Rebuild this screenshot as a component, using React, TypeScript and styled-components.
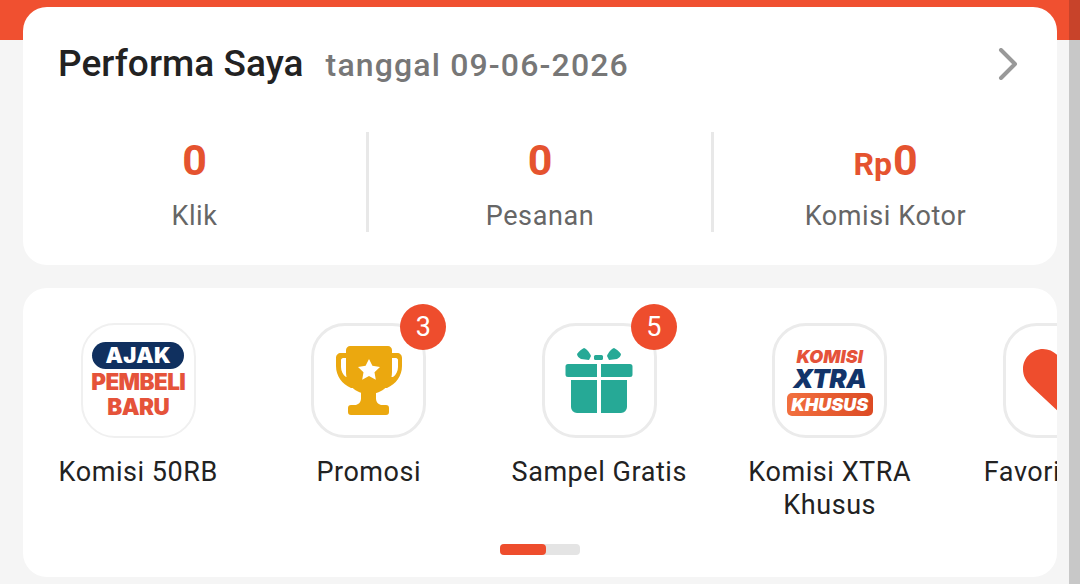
import React from "react";
import styled, { createGlobalStyle } from "styled-components";

const Global = createGlobalStyle`
  html, body { margin: 0; padding: 0; width: 1080px; height: 584px; overflow: hidden; background: #f5f5f5; }
  * { box-sizing: border-box; }
`;
const Page = styled.div`
  width: 1080px; height: 584px; display: flex; overflow: hidden;
  font-family: Roboto, "Liberation Sans", sans-serif;
`;
const Main = styled.main`
  position: relative; width: 1069px; height: 584px; background: #f5f5f5;
  padding: 7px 12px 0 23px; display: flex; flex-direction: column; gap: 23px;
`;
const HeaderBand = styled.div`
  position: absolute; left: 0; top: 0; right: 0; height: 40px; background: #f05030;
`;
const Scrollbar = styled.div`
  width: 11px; height: 584px; background: #c8c8c8;
  border-top: 40px solid #c8432a;
`;
const Card = styled.section`
  position: relative; background: #fff; border-radius: 24px; width: 1034px;
`;
const PerfCard = styled(Card)`
  height: 258px; padding: 32px 36px 0 35px;
`;
const TitleRow = styled.div`
  display: flex; align-items: baseline; height: 50px;
`;
const Title = styled.h2`
  margin: 0; font-size: 37px; font-weight: 500; color: #222; line-height: 50px; letter-spacing: 0.05px;
`;
const DateText = styled.span`
  margin-left: 22px; font-size: 32px; font-weight: 500; color: #777; letter-spacing: 1.15px;
`;
const Chevron = styled.svg`
  position: absolute; left: 975px; top: 41px;
`;
const Stats = styled.div`
  display: grid; grid-template-columns: 346px 345px 1fr; margin: 43px 0 0 -35px; width: 1034px;
`;
const Stat = styled.div<{ $divider?: boolean }>`
  height: 100px; display: flex; flex-direction: column; align-items: center;
  border-right: ${p => (p.$divider ? "3px solid #e8e8e8" : "none")};
`;
const StatValue = styled.div`
  height: 56px; font-size: 43px; line-height: 56px; font-weight: 700; color: #e5532f;
`;
const Currency = styled.span`
  font-size: 32px; margin-right: 1px;
`;
const StatLabel = styled.div`
  margin-top: 10px; font-size: 27px; line-height: 36px; color: #666; letter-spacing: 0.6px;
`;
const MenuCard = styled(Card)`
  height: 289px; overflow: hidden; padding-top: 35px;
`;
const MenuRow = styled.div`
  display: flex; width: 1200px;
`;
const MenuItem = styled.div`
  flex: 0 0 230.5px; width: 230.5px; display: flex; flex-direction: column; align-items: center;
`;
const IconBox = styled.div<{ $soft?: boolean }>`
  position: relative; width: 115px; height: 115px; border-radius: 34px;
  border: ${p => (p.$soft ? "2px solid #f0f0f0" : "3px solid #ebebeb")};
  background: #fff; display: flex; flex-direction: column; align-items: center; justify-content: center;
`;
const Badge = styled.span`
  position: absolute; right: -23px; top: -22px; width: 46px; height: 46px; border-radius: 50%;
  background: #ee4d2d; color: #fff; font-size: 27px; line-height: 46px; text-align: center;
`;
const ItemLabel = styled.div`
  margin-top: 18px; width: 210px; text-align: center; font-size: 27px; line-height: 33px; color: #222; letter-spacing: 0.55px;
  white-space: pre-line;
`;
const AjakPill = styled.div`
  width: 92px; height: 27px; border-radius: 14px; background: #10305f; color: #fff;
  font: 900 22px/27px Inter, "Liberation Sans", sans-serif; text-align: center; letter-spacing: 0.3px;
`;
const AjakLine = styled.div`
  margin-top: 1px; font: 900 22.5px/24px Inter, "Liberation Sans", sans-serif; color: #e5533a; letter-spacing: -0.6px;
`;
const XtraTop = styled.div`
  font: italic 900 18px/21px Inter, "Liberation Sans", sans-serif; color: #e5533a;
`;
const XtraMid = styled.div`
  font: italic 900 26px/24px Inter, "Liberation Sans", sans-serif; color: #12346a; letter-spacing: -0.5px;
`;
const XtraPill = styled.div`
  margin-top: 2px; width: 86px; height: 23px; border-radius: 5px;
  background: linear-gradient(90deg, #f2703f, #dc4a24); color: #fff; text-align: center;
  font: italic 900 18px/23px Inter, "Liberation Sans", sans-serif;
`;
const Pager = styled.div`
  position: absolute; left: 477px; top: 256px; width: 80px; height: 11px; border-radius: 4px; background: #e4e4e4;
`;
const PagerFill = styled.div`
  width: 46px; height: 11px; border-radius: 4px; background: #ee4d2d;
`;

const Trophy = () => (
  <svg width="66" height="69" viewBox="0 0 66 69">
    <path fillRule="evenodd" fill="#eba80f" d="M10 7H5C2 7 0 9 0 12v8c0 10 6 18 15 22h36c9-4 15-12 15-22v-8c0-3-2-5-5-5h-5v5h4c1 0 2 1 2 2v7c0 4-2 8-5 10H10c-3-2-5-6-5-10v-7c0-1 1-2 2-2h3z" />
    <path fill="#eba80f" d="M10 4c0-2 2-4 4-4h38c2 0 4 2 4 4v22c0 12-9 22-23 22S10 38 10 26z" />
    <path fill="#eba80f" d="M25 44h15v8c0 4 2 6 5 7h5c2 0 3 1 3 3v4c0 2-1 3-3 3H15c-2 0-3-1-3-3v-4c0-2 1-3 3-3h5c3-1 5-3 5-7z" />
    <path fill="#fff" d="M33 13l3.400 6.800 7.600 1.100-5.500 5.300 1.300 7.500-6.800-3.600-6.800 3.600 1.300-7.500-5.500-5.300 7.600-1.100z" />
  </svg>
);
const Gift = () => (
  <svg width="68" height="66" viewBox="0 0 68 66">
    <path d="M12 6c2-3 5-5 7-6 3 1 6 5 7 8l-2 4-8-1c-2-1-4-3-4-5zM56 6c-2-3-5-5-7-6-3 1-6 5-7 8l2 4 8-1c2-1 4-3 4-5z" fill="#26a996" />
    <rect x="29" y="7" width="9" height="5" rx="1.500" fill="#26a996" />
    <path d="M3 16h29v13H3a2.500 2.500 0 0 1-2.500-2.500v-8A2.500 2.500 0 0 1 3 16zM36 16h29a2.500 2.500 0 0 1 2.500 2.500v8A2.500 2.500 0 0 1 65 29H36z" fill="#26a996" />
    <path d="M6 32h26v33H12a6 6 0 0 1-6-6zM36 32h26v27a6 6 0 0 1-6 6H36z" fill="#26a996" />
  </svg>
);
const Heart = () => (
  <svg width="74" height="64" viewBox="0 0 74 64">
    <path d="M37 64L8 37C3 32 0 27 0 20 0 9 9 0 20 0c7 0 13 4 17 9 4-5 10-9 17-9 11 0 20 9 20 20 0 7-3 12-8 17z" fill="#ee4d2d" />
  </svg>
);

export default function App() {
  return (
    <Page>
      <Global />
      <Main>
        <HeaderBand />
        <PerfCard>
          <TitleRow>
            <Title>Performa Saya</Title>
            <DateText>tanggal 09-06-2026</DateText>
          </TitleRow>
          <Chevron width="20" height="32" viewBox="0 0 20 32">
            <path d="M3 2l14 14L3 30" fill="none" stroke="#999" strokeWidth="4" strokeLinecap="round" strokeLinejoin="round" />
          </Chevron>
          <Stats>
            <Stat $divider><StatValue>0</StatValue><StatLabel>Klik</StatLabel></Stat>
            <Stat $divider><StatValue>0</StatValue><StatLabel>Pesanan</StatLabel></Stat>
            <Stat><StatValue><Currency>Rp</Currency>0</StatValue><StatLabel>Komisi Kotor</StatLabel></Stat>
          </Stats>
        </PerfCard>
        <MenuCard>
          <MenuRow>
            <MenuItem>
              <IconBox $soft>
                <AjakPill>AJAK</AjakPill>
                <AjakLine>PEMBELI</AjakLine>
                <AjakLine>BARU</AjakLine>
              </IconBox>
              <ItemLabel>Komisi 50RB</ItemLabel>
            </MenuItem>
            <MenuItem>
              <IconBox><Trophy /><Badge>3</Badge></IconBox>
              <ItemLabel>Promosi</ItemLabel>
            </MenuItem>
            <MenuItem>
              <IconBox><Gift /><Badge>5</Badge></IconBox>
              <ItemLabel>Sampel Gratis</ItemLabel>
            </MenuItem>
            <MenuItem>
              <IconBox>
                <XtraTop>KOMISI</XtraTop>
                <XtraMid>XTRA</XtraMid>
                <XtraPill>KHUSUS</XtraPill>
              </IconBox>
              <ItemLabel>{"Komisi XTRA\nKhusus"}</ItemLabel>
            </MenuItem>
            <MenuItem>
              <IconBox><Heart /></IconBox>
              <ItemLabel>Favorit Saya</ItemLabel>
            </MenuItem>
          </MenuRow>
          <Pager><PagerFill /></Pager>
        </MenuCard>
      </Main>
      <Scrollbar />
    </Page>
  );
}
